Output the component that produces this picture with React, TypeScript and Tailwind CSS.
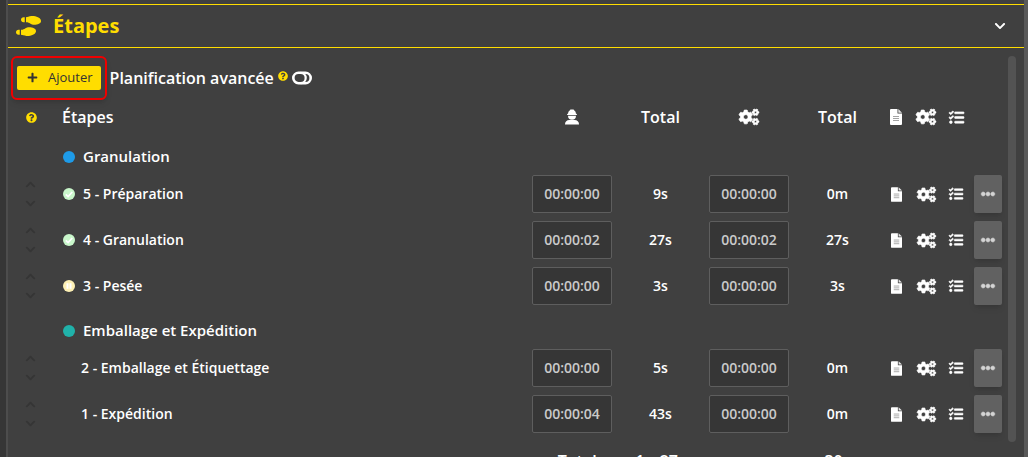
import { useState } from "react";
import {
  FaChevronDown,
  FaChevronUp,
  FaCogs,
  FaEllipsisH,
  FaPlus,
  FaQuestionCircle,
  FaShoePrints,
  FaTasks,
} from "react-icons/fa";

type Status = "done" | "paused";

type Step = {
  id: number;
  name: string;
  status?: Status;
  manual: string;
  manualTotal: string;
  machine: string;
  machineTotal: string;
};

type Group = {
  name: string;
  dot: string;
  steps: Step[];
};

const groups: Group[] = [
  {
    name: "Granulation",
    dot: "bg-[#1e9be8]",
    steps: [
      { id: 5, name: "Préparation", status: "done", manual: "00:00:00", manualTotal: "9s", machine: "00:00:00", machineTotal: "0m" },
      { id: 4, name: "Granulation", status: "done", manual: "00:00:02", manualTotal: "27s", machine: "00:00:02", machineTotal: "27s" },
      { id: 3, name: "Pesée", status: "paused", manual: "00:00:00", manualTotal: "3s", machine: "00:00:00", machineTotal: "3s" },
    ],
  },
  {
    name: "Emballage et Expédition",
    dot: "bg-[#20b2aa]",
    steps: [
      { id: 2, name: "Emballage et Étiquettage", manual: "00:00:00", manualTotal: "5s", machine: "00:00:00", machineTotal: "0m" },
      { id: 1, name: "Expédition", manual: "00:00:04", manualTotal: "43s", machine: "00:00:00", machineTotal: "0m" },
    ],
  },
];

function WorkerIcon() {
  return (
    <svg viewBox="0 0 14 16" className="mx-auto h-4 w-[14px]" fill="currentColor" aria-hidden="true">
      <path d="M5.4 .4h3.2l.5.8A4 4 0 0 1 11 4.700h.4a.5.5 0 0 1 .5.500v.8H2.100v-.8a.5.5 0 0 1 .5-.5H3A4 4 0 0 1 4.900 1.200z" />
      <path d="M3 6.800h8a4 4 0 0 1-8 0z" />
      <path d="M4.200 11h5.600A4.200 4.200 0 0 1 14 15.200v.3H0v-.3A4.200 4.200 0 0 1 4.200 11z" />
    </svg>
  );
}

function FileIcon({ className }: { className: string }) {
  return (
    <svg viewBox="0 0 12 16" className={className} aria-hidden="true">
      <path d="M1 0h6.500v4.500H12V15a1 1 0 0 1-1 1H1a1 1 0 0 1-1-1V1a1 1 0 0 1 1-1z" fill="#fff" />
      <path d="M8.300 0L12 3.700H8.300z" fill="#e6e6e6" />
      <path d="M3 7.500h6M3 9.500h6M3 11.500h6" stroke="#8c8c8c" strokeWidth=".8" />
    </svg>
  );
}

function ToggleIcon() {
  return (
    <svg viewBox="0 0 20 14" className="h-[14px] w-5" fill="none" stroke="currentColor" strokeWidth="2.600" aria-hidden="true">
      <rect x="1.300" y="1.800" width="17.400" height="10.400" rx="5.200" />
      <path d="M8.500 1.800a5.200 5.200 0 0 1 0 10.400" strokeWidth="2.200" />
    </svg>
  );
}

function StatusIcon({ status }: { status: Status }) {
  if (status === "done") {
    return (
      <svg viewBox="0 0 12 12" className="h-3 w-3" aria-label="Terminé">
        <circle cx="6" cy="6" r="6" fill="#c9f7cb" />
        <path d="M2.800 6.300l2.300 2.200 4.200-4.500" fill="none" stroke="#fff" strokeWidth="1.700" />
      </svg>
    );
  }
  return (
    <svg viewBox="0 0 12 12" className="h-3 w-3" aria-label="En pause">
      <circle cx="6" cy="6" r="6" fill="#fdf0b4" />
      <path d="M3.500 3.200h2v5.600h-2zM6.500 3.200h2v5.600h-2z" fill="#fff" />
    </svg>
  );
}

function TimeInput({ value, label }: { value: string; label: string }) {
  return (
    <input
      type="text"
      defaultValue={value}
      aria-label={label}
      className="mx-auto block h-[38px] w-20 rounded-xs border border-[#5e5e5e] bg-[#363636] pb-0.5 text-center text-sm font-semibold text-[#cacaca]"
    />
  );
}

function StepRow({ step }: { step: Step }) {
  return (
    <tr className="h-[46px] text-sm">
      <td>
        <div className="flex flex-col items-center gap-2 pr-px text-[#353535]">
          <button type="button" aria-label="Monter">
            <FaChevronUp className="size-[11px]" />
          </button>
          <button type="button" aria-label="Descendre">
            <FaChevronDown className="size-[11px]" />
          </button>
        </div>
      </td>
      <td>
        <div className={`flex items-center gap-2 ${step.status ? "pl-[9px]" : "pl-[27px]"}`}>
          {step.status && <StatusIcon status={step.status} />}
          <span>
            {step.id} - {step.name}
          </span>
        </div>
      </td>
      <td>
        <TimeInput value={step.manual} label={`Temps opérateur ${step.name}`} />
      </td>
      <td className="text-center">{step.manualTotal}</td>
      <td>
        <TimeInput value={step.machine} label={`Temps machine ${step.name}`} />
      </td>
      <td className="text-center">{step.machineTotal}</td>
      <td>
        <FileIcon className="mx-auto h-[15px] w-[11px]" />
      </td>
      <td>
        <FaCogs className="mx-auto h-[15px] w-[19px] overflow-visible" strokeWidth={20} />
      </td>
      <td>
        <FaTasks className="mx-auto size-[14px] overflow-visible" strokeWidth={20} />
      </td>
      <td>
        <button
          type="button"
          aria-label={`Options ${step.name}`}
          className="mx-auto flex h-[38px] w-7 items-center justify-center rounded-xs bg-[#616161] text-[#d4d4d4] shadow-md"
        >
          <FaEllipsisH className="size-[14px] overflow-visible" strokeWidth={20} />
        </button>
      </td>
    </tr>
  );
}

export default function App() {
  const [open, setOpen] = useState(true);
  const [advanced, setAdvanced] = useState(false);

  return (
    <div className="flex h-screen overflow-hidden bg-[#363636] pl-[6px] font-['Open_Sans','Noto_Sans',sans-serif] font-semibold text-white">
      <section className="flex min-w-0 flex-1 flex-col border-r-4 border-l-2 border-r-[#595959] border-l-[#4d4d4d] bg-[#404040] pt-1">
        <header className="flex h-11 shrink-0 items-center border-y border-[#ffdd00] pr-[18px] pl-2">
          <FaShoePrints className="h-5 w-[25px] text-[#ffdd00]" />
          <h2 className="ml-3 flex-1 text-xl font-bold text-[#ffdd00]">Étapes</h2>
          <button type="button" aria-label="Replier" aria-expanded={open} onClick={() => setOpen(!open)}>
            <FaChevronDown className="size-3" />
          </button>
        </header>

        {open && (
          <div className="flex min-h-0 flex-1 pt-2 pr-2">
            <div className="min-w-0 flex-1 overflow-hidden">
              <div className="flex h-[43px] items-center pl-[9px]">
                <div className="relative">
                  <button
                    type="button"
                    className="flex h-6 items-center gap-[10px] rounded-xs bg-[#ffdd00] px-2 pl-[10px] text-[13px] font-medium text-[#333333]"
                  >
                    <FaPlus className="size-[11px]" />
                    Ajouter
                  </button>
                  <span className="pointer-events-none absolute -inset-x-[6px] -inset-y-[10px] rounded-md border-2 border-[#f00000] shadow-md" />
                </div>
                <span className="ml-[9px] text-base">Planification avancée</span>
                <FaQuestionCircle className="mb-1 ml-1 size-[10px] text-[#ffdd00]" />
                <button
                  type="button"
                  role="switch"
                  aria-checked={advanced}
                  aria-label="Planification avancée"
                  className="ml-1"
                  onClick={() => setAdvanced(!advanced)}
                >
                  <ToggleIcon />
                </button>
              </div>

              <table className="w-full table-fixed">
                <colgroup>
                  <col className="w-[46px]" />
                  <col />
                  <col className="w-[90px]" />
                  <col className="w-[87px]" />
                  <col className="w-[90px]" />
                  <col className="w-[87px]" />
                  <col className="w-[30px]" />
                  <col className="w-[30px]" />
                  <col className="w-[30px]" />
                  <col className="w-[34px]" />
                </colgroup>
                <thead>
                  <tr className="h-9 text-base">
                    <th>
                      <FaQuestionCircle className="mx-auto size-[11px] text-[#ffdd00]" />
                    </th>
                    <th className="pl-2 text-left font-semibold">Étapes</th>
                    <th>
                      <WorkerIcon />
                    </th>
                    <th className="font-semibold">Total</th>
                    <th>
                      <FaCogs className="mx-auto h-4 w-5 overflow-visible" strokeWidth={20} />
                    </th>
                    <th className="font-semibold">Total</th>
                    <th>
                      <FileIcon className="mx-auto h-4 w-3" />
                    </th>
                    <th>
                      <FaCogs className="mx-auto h-4 w-5 overflow-visible" strokeWidth={20} />
                    </th>
                    <th>
                      <FaTasks className="mx-auto size-[15px] overflow-visible" strokeWidth={20} />
                    </th>
                    <th />
                  </tr>
                </thead>
                {groups.map((group) => (
                  <tbody key={group.name}>
                    <tr className="h-9 text-[15px]">
                      <td />
                      <td colSpan={9} className="pt-[7px]">
                        <div className="flex items-center gap-2 pl-[9px]">
                          <span className={`size-3 rounded-full ${group.dot}`} />
                          {group.name}
                        </div>
                      </td>
                    </tr>
                    {group.steps.map((step) => (
                      <StepRow key={step.id} step={step} />
                    ))}
                  </tbody>
                ))}
                <tfoot>
                  <tr className="h-12 text-base">
                    <td />
                    <td />
                    <td className="pr-4 text-right">Total:</td>
                    <td className="text-center">1m27s</td>
                    <td />
                    <td className="text-center">30s</td>
                    <td colSpan={4} />
                  </tr>
                </tfoot>
              </table>
            </div>
            <div className="mb-[15px] ml-[3px] w-2 shrink-0 rounded-full bg-[#535353]" />
          </div>
        )}
      </section>
    </div>
  );
}
